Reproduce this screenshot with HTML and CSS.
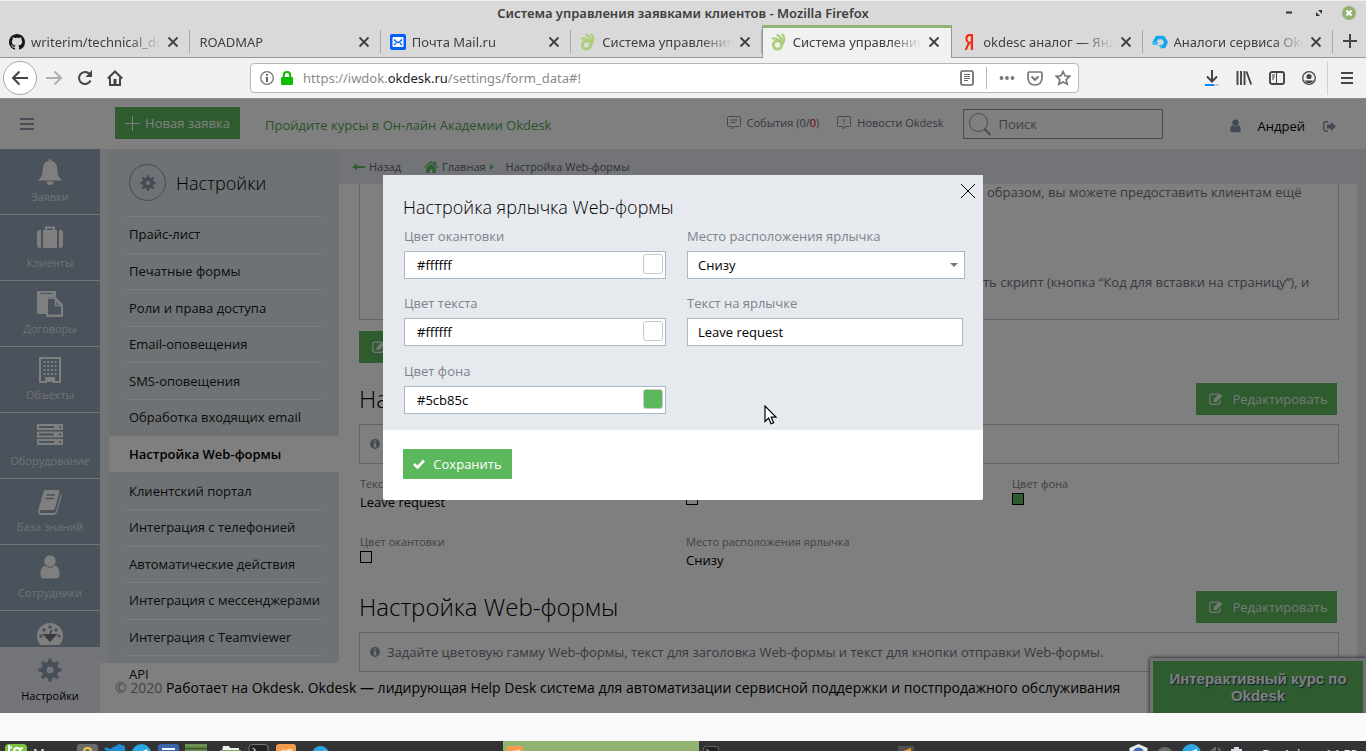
FILE: index.html
```html
<!DOCTYPE html>
<html lang="ru">
<head>
<meta charset="utf-8">
<title>Система управления заявками клиентов</title>
<link rel="stylesheet" href="styles.css">
</head>
<body>
<svg class="defs" aria-hidden="true">
  <symbol id="close" viewBox="0 0 12 12"><path d="M1.5 1.5l9 9M10.500 1.500l-9 9" fill="none" stroke="currentColor" stroke-width="1.800"/></symbol>
  <symbol id="gear" viewBox="0 0 24 24"><circle cx="12" cy="12" r="6" fill="none" stroke="currentColor" stroke-width="5"/><g fill="currentColor"><path id="teeth" d="M9.800 5l.7-4.500h3l.7 4.500zM9.800 19l.7 4.500h3l.7-4.500zM5 9.800l-4.500.7v3l4.500.7zM19 9.800l4.500.7v3l-4.500.7z"/><use href="#teeth" transform="rotate(45 12 12)"/></g></symbol>
  <symbol id="person" viewBox="0 0 20 24"><circle cx="10" cy="6" r="5.700" fill="currentColor"/><path d="M5 10.500Q10 15 15 10.500 19.500 11.500 19.500 19 19.500 23.500 16 23.500H4Q.5 23.500.5 19 .5 11.500 5 10.500z" fill="currentColor"/></symbol>
  <symbol id="edit" viewBox="0 0 14 12"><path d="M11 7.500V9.500Q11 11.300 9 11.300H2.700Q.8 11.300.8 9.500V3Q.8 1.200 2.700 1.200H9" fill="none" stroke="currentColor" stroke-width="1.300"/><path d="M4.500 9V6.600L10.500.6 13.200 3.200 7.200 9z" fill="currentColor"/></symbol>
  <symbol id="info" viewBox="0 0 10 10"><circle cx="5" cy="5" r="5" fill="#8a98aa"/><path d="M4.200 1.500h1.700v1.300H4.200zM3.500 4h2.400v3.200h.8v1.100H3.500V7.200h.7V5.100h-.7z" fill="#fff"/></symbol>
  <symbol id="okhand" viewBox="0 0 16 18"><circle cx="6.500" cy="12" r="4.200" fill="none" stroke="#a9cf78" stroke-width="2.800"/><path d="M1.500 5.500Q5 4.500 9.500 8M6.500 2Q11.500 4.500 11 11M11.500 1.500Q15 6 11.500 11" fill="none" stroke="#a9cf78" stroke-width="2.200" stroke-linecap="round"/></symbol>
  <symbol id="plane" viewBox="0 0 20 20"><circle cx="10" cy="10" r="10" fill="#2ca5e0"/><path d="M4 10l12-5-2 10-4-3z" fill="#fff"/></symbol>
  <symbol id="term" viewBox="0 0 20 20"><rect x=".5" y=".5" width="19" height="19" rx="3" fill="#222" stroke="#777"/><path d="M4 4l3 2-3 2M8 9h4" stroke="#eee" fill="none"/></symbol>
  <symbol id="fox" viewBox="0 0 20 20"><rect width="20" height="20" rx="3" fill="#f79a4b"/><path d="M3 10q2-6 7-4 4-3 7 0l-2 8H6z" fill="#fbd3ad"/></symbol>
</svg>

<header class="titlebar">
  <span class="window-title">Система управления заявками клиентов - Mozilla Firefox</span>
  <div class="window-buttons">
    <button aria-label="Свернуть"><svg width="14" height="14"><path d="M4 6.500h6" stroke="#333" stroke-width="2"/></svg></button>
    <button aria-label="Восстановить"><svg width="14" height="14"><path d="M6 4h4v4zM4 6v4h4z" fill="#333"/></svg></button>
    <button aria-label="Закрыть"><svg width="14" height="14"><circle cx="7" cy="7" r="7" fill="#92b372"/><path d="M4.500 4.500l5 5m0-5l-5 5" stroke="#fff" stroke-width="2"/></svg></button>
  </div>
</header>

<nav class="tabs">
  <div class="tab"><svg width="16" height="16" viewBox="0 0 16 16"><path fill="#191717" d="M8 0C3.580 0 0 3.580 0 8c0 3.540 2.290 6.530 5.470 7.590.4.070.55-.17.55-.38 0-.19-.01-.82-.01-1.490-2.010.37-2.530-.49-2.690-.94-.09-.23-.48-.94-.82-1.130-.28-.15-.68-.52-.01-.53.63-.01 1.080.58 1.230.82.72 1.210 1.870.87 2.330.66.07-.52.28-.87.51-1.070-1.780-.2-3.640-.89-3.640-3.950 0-.87.31-1.590.82-2.150-.08-.2-.36-1.020.08-2.120 0 0 .67-.21 2.200.82.64-.18 1.320-.27 2-.27s1.360.09 2 .27c1.530-1.040 2.200-.82 2.200-.82.44 1.100.16 1.920.08 2.120.51.56.82 1.270.82 2.150 0 3.070-1.870 3.750-3.650 3.950.29.25.54.73.54 1.480 0 1.070-.01 1.930-.01 2.200 0 .21.15.46.55.38A8.010 8.010 0 0 0 16 8c0-4.420-3.580-8-8-8z"/></svg><span>writerim/technical_docs</span><button aria-label="Закрыть вкладку"><svg width="12" height="12"><use href="#close"/></svg></button></div>
  <div class="tab"><span>ROADMAP</span><button aria-label="Закрыть вкладку"><svg width="12" height="12"><use href="#close"/></svg></button></div>
  <div class="tab"><svg width="16" height="16" viewBox="0 0 16 16"><rect width="16" height="16" rx="2" fill="#005ff9"/><rect x="2.500" y="3" width="11" height="10" rx="1" fill="#fff"/><path d="M4 5.500l2 2M12 5.500l-2 2M4 11l2-2M12 11l-2-2M6 7.500q2 2 4 0" fill="none" stroke="#005ff9" stroke-width="1.300"/></svg><span>Почта Mail.ru</span><button aria-label="Закрыть вкладку"><svg width="12" height="12"><use href="#close"/></svg></button></div>
  <div class="tab"><svg width="16" height="18"><use href="#okhand"/></svg><span>Система управления заявками</span><button aria-label="Закрыть вкладку"><svg width="12" height="12"><use href="#close"/></svg></button></div>
  <div class="tab active"><svg width="16" height="18"><use href="#okhand"/></svg><span>Система управления заявками</span><button aria-label="Закрыть вкладку"><svg width="12" height="12"><use href="#close"/></svg></button></div>
  <div class="tab"><svg width="16" height="16" viewBox="0 0 16 16"><path d="M12 0v16H9.800V9.500H8.700L5.800 16H3.500l3.200-7Q4.300 7.800 4.300 4.800 4.300 0 8.800 0zM9.800 1.900H8.900Q6.500 1.900 6.500 4.700 6.500 7.700 8.900 7.700h.9z" fill="#f9270d"/></svg><span>okdesc аналог — Яндекс</span><button aria-label="Закрыть вкладку"><svg width="12" height="12"><use href="#close"/></svg></button></div>
  <div class="tab"><svg width="16" height="16" viewBox="0 0 16 16"><path d="M2 9L5 3.500h6L14 8l-2 4.500H8.500" fill="none" stroke="#14a5ee" stroke-width="3.600" stroke-linejoin="round"/><path d="M0 8h7l-2 3H1zM6 11h4v4z" fill="#35c0f5"/></svg><span>Аналоги сервиса Okdesk</span><button aria-label="Закрыть вкладку"><svg width="12" height="12"><use href="#close"/></svg></button></div>
  <button class="new-tab" aria-label="Новая вкладка"><svg width="16" height="16"><path d="M8 1v14M1 8h14" stroke="#444" stroke-width="2"/></svg></button>
</nav>

<div class="toolbar">
  <button class="back" aria-label="Назад"><svg width="18" height="16"><path d="M17 8H2M8.500 1.500L2 8l6.500 6.500" fill="none" stroke="#444" stroke-width="2"/></svg></button>
  <button aria-label="Вперёд"><svg width="18" height="16"><path d="M1 8h15M9.500 1.500L16 8l-6.500 6.500" fill="none" stroke="#b0b0b0" stroke-width="2"/></svg></button>
  <button aria-label="Обновить"><svg width="16" height="16"><path d="M13.500 10.500A6 6 0 1 1 12.500 4" fill="none" stroke="#444" stroke-width="2"/><path d="M15 0v7H8.500z" fill="#444"/></svg></button>
  <button aria-label="Домой"><svg width="16" height="16"><path d="M.8 8.500L8 1.500l7.200 7M3 7.500V15h10V7.500" fill="none" stroke="#444" stroke-width="2"/><path d="M6.500 9h3v6h-3z" fill="#444"/></svg></button>
  <div class="urlbar">
    <svg width="14" height="14"><circle cx="7" cy="7" r="6.300" fill="none" stroke="#777" stroke-width="1.300"/><path d="M6 3h2v1.700H6zM5.500 6H8v5H6V7h-.5z" fill="#666"/></svg>
    <svg width="12" height="14"><rect y="6" width="12" height="8" rx="1" fill="#12bc00"/><path d="M2.800 7V4.200Q2.800 1 6 1t3.200 3.200V7" fill="none" stroke="#12bc00" stroke-width="2"/></svg>
    <div class="url" role="textbox" aria-label="Адрес">https://iwdok.<b>okdesk.ru</b>/settings/form_data#!</div>
    <button aria-label="Режим чтения"><svg width="14" height="16"><rect x="1" y="1" width="12" height="14" rx="1.500" fill="none" stroke="#666" stroke-width="1.700"/><path d="M4 4.500h6M4 6.500h6M4 8.500h6M4 10.500h4" stroke="#666"/></svg></button>
    <span class="url-sep"></span>
    <button aria-label="Действия"><svg width="16" height="6"><circle cx="2.500" cy="3" r="1.900" fill="#777"/><circle cx="8" cy="3" r="1.900" fill="#777"/><circle cx="13.500" cy="3" r="1.900" fill="#777"/></svg></button>
    <button aria-label="Pocket"><svg width="16" height="15"><path d="M2.500 1h11Q15 1 15 2.500V7q-.5 7-7 7T1 7V2.500Q1 1 2.500 1z" fill="none" stroke="#777" stroke-width="1.700"/><path d="M4.500 5.500L8 8.800l3.500-3.300" fill="none" stroke="#777" stroke-width="2"/></svg></button>
    <button aria-label="В закладки"><svg width="16" height="16"><path d="M8 1.500l2 4.300 4.700.5-3.500 3.200 1 4.700L8 11.900l-4.200 2.300 1-4.700L1.300 6.300 6 5.800z" fill="none" stroke="#777" stroke-width="1.700"/></svg></button>
  </div>
  <div class="tools">
    <button aria-label="Загрузки"><svg width="14" height="16"><path d="M7 0v11M2 6.500L7 11.500l5-5" fill="none" stroke="#444" stroke-width="2"/><path d="M0 15h9" stroke="#0a84ff" stroke-width="2"/><path d="M9 15h5" stroke="#ccc" stroke-width="2"/></svg></button>
    <button aria-label="Библиотека"><svg width="16" height="14"><path d="M1.500 0v14M5 0v14M8.500 0v14M10.500.5l4.700 13" stroke="#444" stroke-width="1.900"/></svg></button>
    <button aria-label="Боковая панель"><svg width="16" height="14"><rect x="1" y="1" width="14" height="12" rx="2" fill="none" stroke="#444" stroke-width="1.900"/><path d="M7.500 1v12M3 4h3M3 6h3M3 8h2" stroke="#444"/></svg></button>
    <button aria-label="Профиль"><svg width="14" height="14"><circle cx="7" cy="7" r="6.300" fill="none" stroke="#444" stroke-width="1.300"/><circle cx="7" cy="5.500" r="2.600" fill="#444"/><path d="M2.500 9.500h9Q9.500 12.300 7 12.300T2.500 9.500z" fill="#444"/></svg></button>
  </div>
  <button class="menu" aria-label="Меню"><svg width="12" height="12"><path d="M0 1h12M0 6h12M0 11h12" stroke="#444" stroke-width="2"/></svg></button>
</div>

<div class="app">
  <header class="app-header">
    <button class="burger" aria-label="Свернуть меню"><svg width="14" height="12"><path d="M0 1h14M0 6h14M0 11h14" stroke="#8e9cae" stroke-width="2"/></svg></button>
    <button class="btn new"><svg width="15" height="15"><path d="M7.500 0v15M0 7.500h15" stroke="#fff"/></svg>Новая заявка</button>
    <a class="promo" href="#">Пройдите курсы в Он-лайн Академии Okdesk</a>
    <div class="header-right">
      <a class="notice" href="#"><svg width="14" height="14"><path d="M1.500.5h11q1 0 1 1v8q0 1-1 1H7l-2 2.500v-2.500H1.500q-1 0-1-1v-8q0-1 1-1zM3.500 4h7M3.500 6.500h5" fill="none" stroke="#8b93a5"/></svg><span>События (0/<i>0</i>)</span></a>
      <a class="notice" href="#"><svg width="14" height="14"><path d="M1.500.5h11q1 0 1 1v8q0 1-1 1H8L6 13v-2.500H1.500q-1 0-1-1v-8q0-1 1-1zM7 3v3.500M7 7.500v1" fill="none" stroke="#8b93a5"/></svg><span>Новости Okdesk</span></a>
      <label class="search"><svg width="22" height="23"><circle cx="9.500" cy="9.500" r="9" fill="none" stroke="#8b93a5"/><path d="M15.500 16l6 6" stroke="#8b93a5" stroke-width="2"/></svg><input type="search" placeholder="Поиск" aria-label="Поиск"></label>
      <a class="user" href="#"><svg width="11" height="14"><use href="#person" color="#8392a5"/></svg>Андрей</a>
      <a class="logout" href="#" aria-label="Выход"><svg width="13" height="11"><path d="M5 .8H2.500Q.8.800.8 2.500v6Q.8 10.200 2.500 10.200H5" fill="none" stroke="#8392a5" stroke-width="1.400"/><path d="M4 3.500h4V.8l5 4.700-5 4.700V7.500H4z" fill="#8392a5"/></svg></a>
    </div>
  </header>

  <div class="app-body">
    <nav class="rail">
      <div class="rail-list">
        <a href="#"><svg width="26" height="26"><path d="M13 0q1.200 0 1.200 1.700 6 1.300 6 8.300 0 8 5 11.500H.8Q5.800 18 5.800 10q0-7 6-8.300Q11.800 0 13 0z" fill="#fff"/><path d="M9.500 22.500h7Q16 26 13 26t-3.500-3.500z" fill="#fff"/></svg>Заявки</a>
        <a href="#"><svg width="26" height="26"><path d="M9 6V2.500h8V6" fill="none" stroke="#fff" stroke-width="2"/><path d="M3 5h1v18H3q-3 0-3-3V8q0-3 3-3zM6 5h14v18H6zM22 5h1q3 0 3 3v12q0 3-3 3h-1z" fill="#fff"/></svg>Клиенты</a>
        <a href="#"><svg width="26" height="26"><path d="M0 1q0-1 1-1h17q1 0 1 1v5h-8v17H1q-1 0-1-1z" fill="#fff"/><path d="M3.500 2.500h12" stroke="#94a4b8"/><path d="M11 7h7v8h8v9q0 2-2 2H12q-2 0-2-2V9q0-2 1-2z" fill="#fff"/><path d="M11 8h7v7h6v8.500H11z" fill="#94a4b8"/><path d="M18.500 7L26 14.500V25H10V7zM18.500 9v5.500H24z" fill="none" stroke="#fff" stroke-width="1.500"/></svg>Договоры</a>
        <a href="#"><svg width="22" height="26"><path d="M1 1h20v24h-6v-4H7v4H1z" fill="none" stroke="#fff" stroke-width="2"/><path d="M4.500 5h13M4.500 9h13M4.500 13h13M4.500 17h13" stroke="#fff" stroke-width="2" stroke-dasharray="2 1.700"/><path d="M7 21h8v4H7z" fill="#fff"/></svg>Объекты</a>
        <a href="#"><svg width="26" height="26"><path d="M0 1h26v6H0zM0 8.500h26v6H0zM0 16h26v6H0z" fill="#fff"/><path d="M2 4h15M2 11.500h15M2 19h15M22 4h2M22 11.500h2M22 19h2" stroke="#94a4b8" stroke-width="2"/></svg>Оборудование</a>
        <a href="#"><svg width="26" height="26"><path d="M8.500 1H21q2 0 1.500 2L18 19q-.5 2-2.500 2H4l-1.500 1.500Q2.500 24 4.500 24H17q1.500 0 2-2l5-17q1 1 .5 2.500L20 23q-1 3-3.500 3H4q-3 0-3-4L6.500 3Q7 1 8.500 1z" fill="#fff"/><path d="M9.500 6h8.500M8.500 9.500H17" stroke="#94a4b8" stroke-width="1.500"/></svg>База знаний</a>
        <a href="#"><svg width="20" height="26" viewBox="0 0 20 26"><use href="#person" width="20" height="24" color="#fff"/></svg>Сотрудники</a>
        <a href="#"><svg width="26" height="26"><path d="M3.500 24Q0 20 0 15a13 13 0 0 1 26 0q0 5-3.500 9z" fill="#fff"/><g fill="#94a4b8"><circle cx="4" cy="15" r="1.800"/><circle cx="7" cy="9" r="1.800"/><circle cx="13" cy="6" r="1.800"/><circle cx="19" cy="9" r="1.800"/><circle cx="22" cy="15" r="1.800"/></g><path d="M5.500 13h15L13 21z" fill="#75757f"/><path d="M13 14l1.500-5" stroke="#75757f" stroke-width="1.500"/></svg>Отчёты</a>
      </div>
      <a class="current" href="#"><svg width="24" height="26"><use href="#gear" color="#8c9cae"/></svg>Настройки</a>
    </nav>

    <div class="stage">
      <div class="workspace">
        <aside class="submenu">
          <h2><span class="ring"><svg width="16" height="16"><use href="#gear"/></svg></span>Настройки</h2>
          <ul>
            <li><a href="#">Прайс-лист</a></li>
            <li><a href="#">Печатные формы</a></li>
            <li><a href="#">Роли и права доступа</a></li>
            <li><a href="#">Email-оповещения</a></li>
            <li><a href="#">SMS-оповещения</a></li>
            <li><a href="#">Обработка входящих email</a></li>
            <li class="selected"><a href="#">Настройка Web-формы</a></li>
            <li><a href="#">Клиентский портал</a></li>
            <li><a href="#">Интеграция с телефонией</a></li>
            <li><a href="#">Автоматические действия</a></li>
            <li><a href="#">Интеграция с мессенджерами</a></li>
            <li><a href="#">Интеграция с Teamviewer</a></li>
            <li><a href="#">API</a></li>
          </ul>
        </aside>
        <div class="page">
          <nav class="crumbs">
            <a href="#"><svg width="13" height="8"><path d="M13 4H3" stroke="#5cb85c" stroke-width="2"/><path d="M0 4l5-3.500v7z" fill="#5cb85c"/></svg>Назад</a>
            <a class="home" href="#"><svg width="14" height="12"><path d="M7 0l3 2.500V.5h2v3.800L14 6l-.8 1L7 1.800.8 7 0 6zM2.200 7L7 3l4.800 4v5H8.300V8.500H5.700V12H2.200z" fill="#5cb85c"/></svg>Главная<svg width="4" height="6"><path d="M0 0l4 3-4 3z" fill="#5cb85c"/></svg></a>
            <span>Настройка Web-формы</span>
          </nav>
          <main class="content">
            <div class="intro">
              <p>образом, вы можете предоставить клиентам ещё</p>
              <p>ть скрипт (кнопка “Код для вставки на страницу”), и</p>
            </div>
            <button class="btn edit"><svg width="14" height="12"><use href="#edit"/></svg>Редактировать</button>
            <section>
              <div class="section-head"><h1>Настройка ярлычка</h1><button class="btn edit"><svg width="14" height="12"><use href="#edit"/></svg>Редактировать</button></div>
              <div class="hint"><svg width="10" height="10"><use href="#info"/></svg></div>
              <dl>
                <div><dt>Текст на ярлычке</dt><dd>Leave request</dd></div>
                <div><dt>Цвет текста</dt><dd><span class="chip"></span></dd></div>
                <div><dt>Цвет фона</dt><dd><span class="chip green"></span></dd></div>
                <div><dt>Цвет окантовки</dt><dd><span class="chip"></span></dd></div>
                <div><dt>Место расположения ярлычка</dt><dd>Снизу</dd></div>
              </dl>
            </section>
            <section>
              <div class="section-head"><h1>Настройка Web-формы</h1><button class="btn edit"><svg width="14" height="12"><use href="#edit"/></svg>Редактировать</button></div>
              <div class="hint"><svg width="10" height="10"><use href="#info"/></svg>Задайте цветовую гамму Web-формы, текст для заголовка Web-формы и текст для кнопки отправки Web-формы.</div>
            </section>
          </main>
        </div>
      </div>
      <footer class="app-footer"><span>© 2020</span> Работает на Okdesk. Okdesk — лидирующая Help Desk система для автоматизации сервисной поддержки и постпродажного обслуживания</footer>
    </div>
  </div>

  <button class="course">Интерактивный курс по Okdesk</button>

  <div class="backdrop">
    <form class="modal" role="dialog" aria-labelledby="modal-title">
      <button type="button" class="modal-close" aria-label="Закрыть"><svg width="14" height="14"><path d="M0 0l14 14M14 0L0 14" stroke="#000"/></svg></button>
      <div class="modal-body">
        <h3 id="modal-title">Настройка ярлычка Web-формы</h3>
        <div class="fields">
          <div class="field"><label for="border">Цвет окантовки</label><div class="color"><input id="border" type="text" value="#ffffff"><button type="button" class="swatch" aria-label="Выбрать цвет"></button></div></div>
          <div class="field"><label for="place">Место расположения ярлычка</label><div class="pick"><select id="place"><option>Снизу</option></select></div></div>
          <div class="field"><label for="text">Цвет текста</label><div class="color"><input id="text" type="text" value="#ffffff"><button type="button" class="swatch" aria-label="Выбрать цвет"></button></div></div>
          <div class="field narrow"><label for="caption">Текст на ярлычке</label><input id="caption" type="text" value="Leave request"></div>
          <div class="field"><label for="bg">Цвет фона</label><div class="color"><input id="bg" type="text" value="#5cb85c"><button type="button" class="swatch green" aria-label="Выбрать цвет"></button></div></div>
        </div>
      </div>
      <div class="modal-footer"><button type="button" class="btn save"><svg width="12" height="10"><path d="M1 5l3.500 3.500L11 1.500" fill="none" stroke="#fff" stroke-width="2.600"/></svg>Сохранить</button></div>
      <svg class="pointer" width="13" height="20"><path d="M1 1v15.500l3.600-3.400 2.400 5.700 2.600-1.100-2.400-5.500H12z" fill="#fff" stroke="#000" stroke-width="1.200"/></svg>
    </form>
  </div>
</div>

<div class="desk"></div>
<footer class="taskbar">
  <div class="start"><svg width="22" height="20"><rect y="1" width="22" height="19" rx="4" fill="#7cc242"/><path d="M4 2v14M4 4.500h3M9 16V8q0-3 3-3t3 3v6M15 8q0-3 3-3" fill="none" stroke="#fff" stroke-width="2"/></svg>Меню</div>
  <div class="launchers">
    <svg width="21" height="20"><rect width="21" height="20" rx="3" fill="#6b6b6b"/><path d="M7 9V7q0-3 3.500-3T14 7v2" fill="none" stroke="#f2c14b" stroke-width="2"/></svg>
    <svg width="21" height="20"><path d="M15 0l6 2v16l-6 2L6 11l-4 3-2-2 4-4-4-3 2-2 4 2z" fill="#1f8ad2"/></svg>
    <svg width="21" height="20"><use href="#plane"/></svg>
    <svg width="21" height="20"><rect width="21" height="20" rx="3" fill="#3c66ab"/><path d="M4 5h13M4 8h9" stroke="#fff" stroke-width="2"/></svg>
    <svg width="22" height="20"><rect width="22" height="20" fill="#6f9150"/><path d="M0 4.500h22" stroke="#3f5a2c" stroke-width="2"/></svg>
  </div>
  <div class="launchers second">
    <svg width="21" height="20"><path d="M3 2h6l1 2h9v3H2z" fill="#eee"/><rect y="6" width="21" height="14" fill="#87ad65"/></svg>
    <svg width="21" height="20"><use href="#term"/></svg>
    <svg width="20" height="20"><use href="#fox"/></svg>
  </div>
  <div class="task first"><svg width="17" height="17"><use href="#plane"/></svg><span>Telegram</span></div>
  <div class="task on"><svg width="16" height="16"><use href="#fox"/></svg><span>Система управлен…</span></div>
  <div class="task"><svg width="16" height="16"><use href="#term"/></svg><span class="far">Система: Evo Note</span></div>
  <div class="task"><svg width="16" height="16"><rect width="16" height="16" fill="#505050"/><path d="M3 6l10-4v5L3 11z" fill="#f7931e"/></svg><span>~/technical_docs/okdesk</span></div>
  <div class="tray">
    <svg width="19" height="20"><path d="M9.500 0l9 4v8l-9 8-9-8V4z" fill="#e8ebf0"/><circle cx="9.500" cy="9" r="5.500" fill="#3a6db5"/></svg>
    <svg width="18" height="18"><circle cx="9" cy="11" r="8" fill="#6b6b6b"/></svg>
    <svg width="19" height="19"><use href="#plane"/></svg>
    <svg width="14" height="16"><path d="M1 8l5-4v12M9 4q5 4 1 10" fill="none" stroke="#777" stroke-width="1.500"/></svg>
    <svg width="12" height="16"><path d="M0 5h3V3h5v2h3v11H0z" fill="#d5dbe6"/></svg>
    <time>Вс, 1 фев, 14:53</time>
  </div>
</footer>
</body>
</html>
```

FILE: styles.css
```css
* { box-sizing: border-box; }
body { margin: 0; height: 100vh; display: flex; flex-direction: column; overflow: hidden; background: #f9f9f9; font: 13px/20px "Open Sans", "Noto Sans", sans-serif; color: #000; }
button { border: 0; padding: 0; background: none; font: inherit; color: inherit; display: inline-flex; align-items: center; justify-content: center; }
a { color: inherit; text-decoration: none; }
svg { flex: none; display: block; }
h1, h2, h3, p, ul, dl, dd { margin: 0; padding: 0; font-weight: 400; }
.defs { position: absolute; width: 0; height: 0; }

/* Browser window */
.titlebar { flex: none; display: grid; grid-template-columns: 1fr auto 1fr; align-items: center; height: 25px; background: #d9d9d9; border-top: 1px solid #f0f0f0; }
.window-title { grid-column: 2; font-family: "Noto Sans", sans-serif; font-size: 13px; font-weight: 600; color: #404040; }
.window-buttons { display: flex; justify-content: flex-end; gap: 16px; padding-right: 10px; }
.tabs { flex: none; display: grid; grid-template-columns: repeat(7, minmax(0, 1fr)) 33px; height: 33px; background: #d9d9d9; border-bottom: 1px solid #979797; font-family: "Noto Sans", sans-serif; font-size: 13px; color: #404040; }
.tab { position: relative; display: flex; align-items: center; gap: 6px; padding: 1px 11px 0 9px; }
.tab::after { content: ""; position: absolute; right: 0; top: 5px; bottom: 4px; width: 1px; background: #a8a8a8; }
.tab span { flex: 1; min-width: 0; overflow: hidden; white-space: nowrap; -webkit-mask-image: linear-gradient(to left, transparent, #000 32px); mask-image: linear-gradient(to left, transparent, #000 32px); }
.tab.active { margin-bottom: -1px; background: #f1f1f1; border: solid #979797; border-width: 0 1px; border-top: 3px solid #92b372; padding: 0 11px 3px 8px; }
.tab.active::after { display: none; }
.toolbar { flex: none; display: flex; align-items: center; height: 41px; padding: 0 12px 0 3px; background: #f1f1f1; border-bottom: 1px solid #8a8a8a; }
.toolbar > button { margin-right: 14px; }
.toolbar .back { width: 34px; height: 34px; margin-right: 8px; background: #fff; border: 1px solid #a8a8a8; border-radius: 50%; }
.urlbar { flex: 1; display: flex; align-items: center; gap: 7px; height: 30px; margin-left: 113px; padding: 0 7px 0 9px; background: #fff; border: 1px solid #b8b8b8; border-radius: 4px; }
.url { flex: 1; padding-left: 3px; font-family: "Noto Sans", sans-serif; color: #8a8a8a; white-space: nowrap; }
.url b { font-weight: 400; color: #222; }
.urlbar button { margin-left: 5px; }
.url-sep { width: 1px; height: 22px; margin: 0 0 0 5px; background: #b8b8b8; }
.tools { display: flex; align-items: center; gap: 17px; margin: 0 11px 0 126px; }
.toolbar .menu { height: 34px; margin: 0; padding: 0 0 0 13px; border-left: 1px solid #d0d0d0; padding-right: 1px; }

/* Okdesk application */
.app { position: relative; flex: 1; min-height: 0; display: flex; flex-direction: column; overflow: hidden; background: #fff; }
.btn { height: 32px; background: #5cb85c; color: #fff; white-space: nowrap; }
.app-header { flex: none; display: flex; align-items: center; height: 50px; padding: 0 30px 0 20px; }
.burger { margin-right: 81px; }
.new { width: 125px; gap: 5px; margin-bottom: 2px; }
.promo { margin-left: 25px; padding-top: 2px; color: #54a554; }
.header-right { display: flex; align-items: center; margin-left: auto; }
.notice { display: flex; align-items: center; gap: 6px; margin: 0 18px 2px 0; font-size: 11px; color: #6b6f7a; }
.notice i { font-style: normal; color: #e0002a; }
.search { display: flex; align-items: center; width: 200px; height: 30px; margin-left: 1px; padding-left: 5px; gap: 8px; border: 1px solid #8b93a5; }
.search input { flex: 1; min-width: 0; padding: 0; border: 0; background: none; font: inherit; outline: 0; }
.search input::placeholder { color: #85858c; opacity: 1; }
.user { display: flex; align-items: center; gap: 17px; margin: 4px 0 0 67px; }
.logout { margin: 4px 0 0 18px; }
.app-body { flex: 1; min-height: 0; display: flex; }
.rail { flex: none; display: flex; flex-direction: column; width: 100px; font-size: 11px; color: #e0e3e8; background: #94a4b8; }
.rail-list { flex: 1; min-height: 0; overflow: hidden; }
.rail a { display: flex; flex-direction: column; align-items: center; gap: 2px; height: 66px; padding-top: 10px; border-bottom: 1px solid #e6e6e6; }
.rail .current { flex: none; background: #e6e8ee; border: 0; color: #000; gap: 3px; }
.stage { flex: 1; min-width: 0; display: flex; flex-direction: column; }
.workspace { flex: 1; min-height: 0; display: flex; padding-left: 9px; background: #e6e8f0; }
.submenu { flex: none; width: 230px; background: #dce4e8; }
.submenu h2 { display: flex; align-items: center; gap: 10px; height: 67px; padding-left: 20px; font-size: 18px; font-weight: 300; }
.ring { display: flex; align-items: center; justify-content: center; width: 37px; height: 37px; border: 1px solid #8b93a5; border-radius: 50%; color: #8696aa; }
.submenu ul { display: grid; grid-auto-rows: 1fr; height: 476px; list-style: none; color: #16181b; }
.submenu li { display: flex; align-items: center; padding-left: 20px; position: relative; white-space: nowrap; }
.submenu li::before { content: ""; position: absolute; top: 0; left: 17px; right: 17px; height: 1px; background: #fff; }
.submenu .selected { background: #fff; font-weight: 600; color: #000; }
.selected::before, .selected + li::before { visibility: hidden; }
.page { flex: 1; min-width: 0; display: flex; flex-direction: column; }
.crumbs { flex: none; display: flex; align-items: center; height: 35px; padding-left: 13px; font-size: 11px; color: #60636c; }
.crumbs a { display: flex; align-items: center; gap: 4px; margin-right: 12px; }
.crumbs .home { margin-left: 11px; }
.content { flex: 1; min-height: 0; margin-right: 9px; padding: 0 18px 0 20px; background: #fff; }
.intro { display: flex; flex-direction: column; gap: 72px; height: 136px; margin-bottom: 11px; padding-left: 627px; border: 1px solid #c6c8ce; border-top: 0; color: #70747e; white-space: nowrap; overflow: hidden; }
.intro p { margin-top: -2px; }
.intro p + p { margin-left: -4px; }
.edit { width: 141px; gap: 9px; padding-left: 4px; color: #e8f0e8; }
.section-head { display: flex; align-items: center; justify-content: space-between; margin: 20px 2px 9px 0; }
h1 { font-size: 24px; font-weight: 300; line-height: 32px; }
.hint { display: flex; align-items: center; gap: 7px; height: 40px; padding-left: 10px; border: 1px solid #c6c8ce; color: #70747e; white-space: nowrap; }
dl { display: grid; grid-template-columns: repeat(3, 326px); row-gap: 20px; padding: 10px 0 1px 1px; }
dl div { height: 38px; }
dt { font-size: 11px; line-height: 20px; color: #85858a; }
dd { line-height: 17px; }
.chip { display: block; width: 12px; height: 12px; margin-top: -1px; border: 1px solid #000; }
.chip.green { background: #5cb85c; }
.app-footer { flex: none; height: 50px; padding: 15px; font-size: 14px; white-space: nowrap; background: #fff; }
.app-footer span { color: #7d8a9a; }
.submenu ul, .hint { z-index: 1; position: relative; }
.course { position: absolute; right: 0; bottom: -3px; width: 216px; height: 58px; padding: 0 16px; background: #5cb85c; border: 3px solid #e0e0e0; box-shadow: 0 0 4px #222; color: #fff; font: bold 15px/17px "Liberation Sans", sans-serif; text-shadow: 1px 1px 1px #1c3a66; z-index: 2; }

/* Dialog */
.backdrop { position: absolute; inset: 0; display: flex; align-items: flex-start; justify-content: center; padding-top: 76px; background: rgba(0, 0, 0, .5); z-index: 3; }
.modal { position: relative; width: 600px; background: #fff; border-radius: 2px; }
.modal-body { padding: 20px 18px 16px 20px; background: #e6e9ee; }
.modal-close { position: absolute; top: 9px; right: 8px; }
.modal h3 { margin-bottom: 7px; font-size: 18px; line-height: 24px; font-weight: 300; }
.fields { display: grid; grid-template-columns: 262px 1fr; grid-template-rows: 53px 54px auto; gap: 14px 21px; padding-left: 1px; }
.field label { display: block; margin-bottom: 5px; color: #80838c; }
.field.narrow { padding-right: 2px; }
.field input, .field select { display: block; width: 100%; height: 28px; padding: 0 10px; border: 1px solid #aab8c6; border-radius: 0; background: #fff; font: inherit; color: #000; appearance: none; }
.color, .pick { position: relative; }
.field .color input { padding-left: 12px; }
.swatch { position: absolute; top: 3px; right: 3px; width: 20px; height: 20px; border: 1px solid #c8c8c8; border-radius: 3px; background: #fff; }
.swatch.green { background: #5cb85c; }
.pick::after { content: ""; position: absolute; top: 12px; right: 7px; border: 4px solid transparent; border-top-color: #777; border-bottom: 0; }
.modal-footer { padding: 19px 20px 21px; }
.save { height: 30px; width: 109px; gap: 8px; }
.pointer { position: absolute; left: 381px; top: 230px; }

/* Desktop panel */
.desk { flex: none; height: 28px; }
.taskbar { flex: none; display: flex; align-items: flex-start; height: 10px; padding: 0 8px 0 5px; overflow: hidden; background: #333; color: #e8e8e8; white-space: nowrap; }
.taskbar > div { display: flex; align-items: flex-start; padding-top: 3px; }
.taskbar .start { gap: 6px; width: 72px; padding-top: 2px; }
.launchers { gap: 6px; margin-right: 13px; }
.launchers.second { gap: 7px; margin-right: 12px; }
.taskbar .task { flex: 1; min-width: 0; gap: 9px; padding-left: 4px; padding-top: 5px; overflow: hidden; }
.taskbar .on { background: #92b372; }
.task .far { padding-left: 40px; }
.taskbar .tray { gap: 8px; padding-left: 39px; }
.tray time { padding-left: 11px; }
```
